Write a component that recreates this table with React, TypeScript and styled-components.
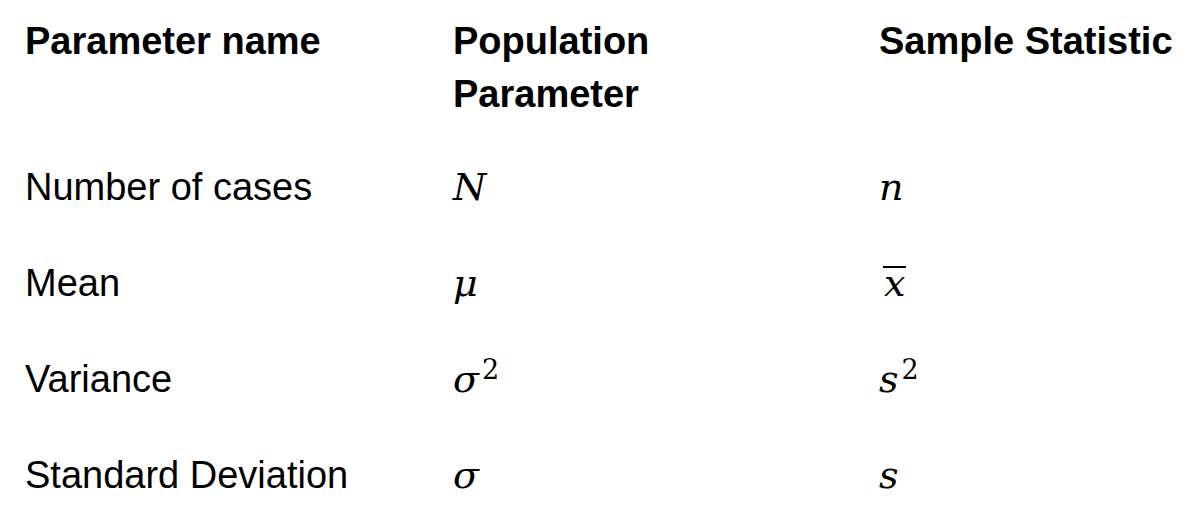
import type { ReactNode } from "react"
import styled, { createGlobalStyle } from "styled-components"

const GlobalStyle = createGlobalStyle`
  html, body {
    margin: 0;
    padding: 0;
    background: #ffffff;
  }
`

const Table = styled.div`
  display: flex;
  flex-direction: column;
  padding: 15px 0 0 25px;
  color: #000000;
  font-family: "Liberation Sans", Arial, sans-serif;
  font-size: 38px;
`

const HeadRow = styled.div`
  display: grid;
  grid-template-columns: 428px 426px 1fr;
  margin-bottom: 18px;
`

const HeadCell = styled.div`
  font-weight: 700;
  line-height: 53px;
  white-space: nowrap;
`

const Row = styled.div`
  display: grid;
  grid-template-columns: 428px 426px 1fr;
  align-items: baseline;
  height: 96px;
`

const Cell = styled.div`
  line-height: 96px;
  white-space: nowrap;
`

const MathText = styled.span`
  font-family: "DejaVu Serif", "Liberation Serif", serif;
  font-style: italic;
  font-size: 38px;
`

const Sup = styled.span`
  font-style: normal;
  font-size: 27px;
  line-height: 0;
  vertical-align: 13px;
  margin-left: 3px;
`

const Bar = styled.span`
  display: inline-block;
  font-family: "DejaVu Serif", "Liberation Serif", serif;
  font-style: italic;
  font-size: 38px;
  line-height: 30px;
  border-top: 2px solid #000000;
  padding: 0 1px;
  margin-left: 4px;
`

const Sym = ({ children }: { children: ReactNode }) => (
  <MathText>{children}</MathText>
)

type Stat = { name: string; pop: ReactNode; sample: ReactNode }

export default function App() {
  const rows: Stat[] = [
    { name: "Number of cases", pop: <Sym>N</Sym>, sample: <Sym>n</Sym> },
    { name: "Mean", pop: <Sym>μ</Sym>, sample: <Bar>x</Bar> },
    {
      name: "Variance",
      pop: (
        <Sym>
          σ<Sup>2</Sup>
        </Sym>
      ),
      sample: (
        <Sym>
          s<Sup>2</Sup>
        </Sym>
      ),
    },
    { name: "Standard Deviation", pop: <Sym>σ</Sym>, sample: <Sym>s</Sym> },
  ]

  return (
    <>
      <GlobalStyle />
      <Table>
        <HeadRow>
          <HeadCell>Parameter name</HeadCell>
          <HeadCell>
            Population
            <br />
            Parameter
          </HeadCell>
          <HeadCell>Sample Statistic</HeadCell>
        </HeadRow>
        {rows.map((r) => (
          <Row key={r.name}>
            <Cell>{r.name}</Cell>
            <Cell>{r.pop}</Cell>
            <Cell>{r.sample}</Cell>
          </Row>
        ))}
      </Table>
    </>
  )
}
